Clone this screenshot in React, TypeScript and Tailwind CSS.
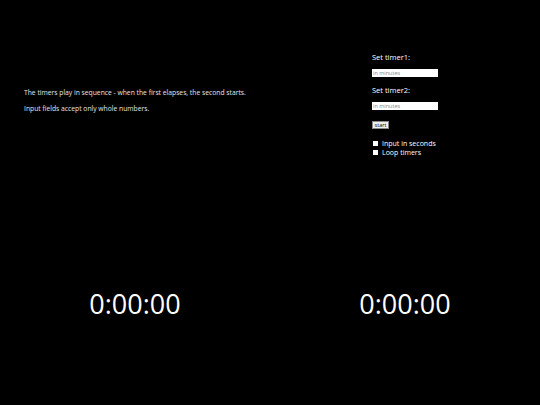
export default function App() {
  return (
    <div className="flex h-[405px] w-[540px] flex-col bg-black text-white" style={{ fontFamily: '"Open Sans", sans-serif' }}>
      <div className="flex justify-between">
        <div className="pl-[24px] pt-[88px] text-[6.75px] leading-[10px] text-[#e5e5e5]">
          <p>The timers play in sequence - when the first elapses, the second starts.</p>
          <p className="mt-[6px]">Input fields accept only whole numbers.</p>
        </div>
        <div className="w-[168px] pt-[52px] text-[7.5px] leading-[10px]">
          <p>Set timer1:</p>
          <input
            type="text"
            placeholder="in minutes"
            className="mt-[7px] block h-[8px] w-[66px] bg-white px-[1px] text-[5.5px] text-black placeholder:text-[#888]"
          />
          <p className="mt-[8px]">Set timer2:</p>
          <input
            type="text"
            placeholder="in minutes"
            className="mt-[7px] block h-[8px] w-[66px] bg-white px-[1px] text-[5.5px] text-black placeholder:text-[#888]"
          />
          <button className="mt-[11px] block h-[8px] w-[17px] border border-[#888] bg-[#efefef] text-[5.5px] leading-[6px] text-black">
            start
          </button>
          <div className="mt-[10px] text-[7px] leading-[9px]">
            <label className="flex items-center gap-[4px]">
              <span className="ml-[1px] h-[5px] w-[5px] bg-white" />
              <span>Input in seconds</span>
            </label>
            <label className="flex items-center gap-[4px]">
              <span className="ml-[1px] h-[5px] w-[5px] bg-white" />
              <span>Loop timers</span>
            </label>
          </div>
        </div>
      </div>
      <div className="mt-[129px] grid grid-cols-2 text-center text-[27px] leading-[36px]">
        <div>0:00:00</div>
        <div>0:00:00</div>
      </div>
    </div>
  );
}
